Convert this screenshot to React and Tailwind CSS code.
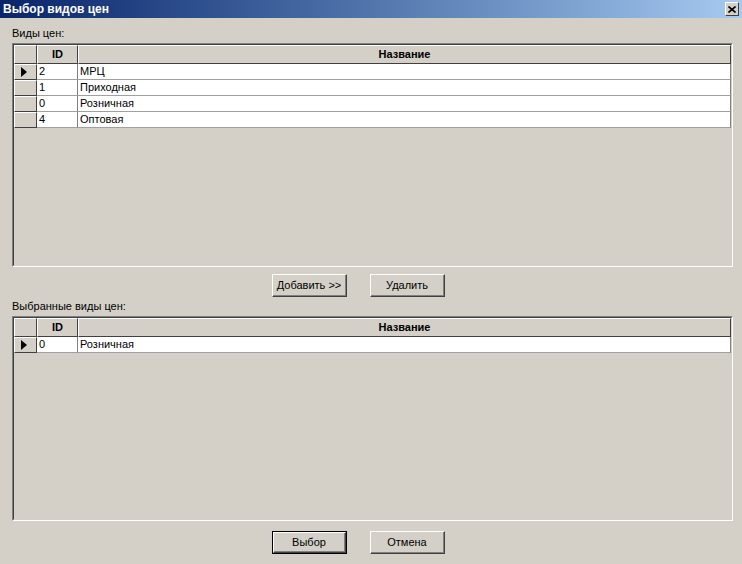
import React from 'react'

const font = { fontFamily: '"Liberation Sans", Arial, sans-serif' }

const priceTypes = [
	{ id: '2', name: 'МРЦ' },
	{ id: '1', name: 'Приходная' },
	{ id: '0', name: 'Розничная' },
	{ id: '4', name: 'Оптовая' },
]

const selected = [{ id: '0', name: 'Розничная' }]

function Arrow() {
	return (
		<svg width="6" height="10" viewBox="0 0 6 10" className="block">
			<path d="M0 0 L6 5 L0 10 Z" fill="#000" />
		</svg>
	)
}

function HeaderCell({ children, className = '' }) {
	return (
		<div className={`h-full border-t border-l border-t-white border-l-white border-r border-b border-r-[#404040] border-b-[#404040] bg-[#d4d0c8] flex items-center justify-center font-bold text-black ${className}`}>
			{children}
		</div>
	)
}

function Grid({ rows, height }) {
	return (
		<div className={`border-t border-l border-t-[#808080] border-l-[#808080] border-r border-b border-r-white border-b-white ${height}`}>
			<div className="h-full border-t border-l border-t-[#404040] border-l-[#404040] border-r border-b border-r-[#d4d0c8] border-b-[#d4d0c8] bg-[#d4d0c8] overflow-hidden">
				<div className="flex h-[19px]">
					<HeaderCell className="w-[23px]" />
					<HeaderCell className="w-[41px]">ID</HeaderCell>
					<HeaderCell className="flex-1">Название</HeaderCell>
				</div>
				{rows.map((r, i) => (
					<div key={r.id} className="flex h-[16px]">
						<div className="w-[23px] h-full border-t border-l border-t-white border-l-white border-r border-b border-r-[#404040] border-b-[#404040] bg-[#d4d0c8] flex items-center pl-[6px]">
							{i === 0 && <Arrow />}
						</div>
						<div className="w-[41px] h-full bg-white border-r border-b border-r-[#808080] border-b-[#a0a0a0] flex items-center pl-[2px] text-black">
							{r.id}
						</div>
						<div className="flex-1 h-full bg-white border-r border-b border-r-[#808080] border-b-[#a0a0a0] flex items-center pl-[2px] text-black">
							{r.name}
						</div>
					</div>
				))}
			</div>
		</div>
	)
}

function Button({ children, isDefault }) {
	return (
		<div className={`w-[75px] h-[23px] bg-[#d4d0c8] ${isDefault ? 'border border-black' : ''}`}>
			<div className="w-full h-full border-t border-l border-t-white border-l-white border-r border-b border-r-[#404040] border-b-[#404040] flex">
				<div className="flex-1 border-r border-b border-r-[#808080] border-b-[#808080] flex items-center justify-center text-black">
					{children}
				</div>
			</div>
		</div>
	)
}

export default function App() {
	return (
		<div style={font} className="w-[742px] h-[564px] bg-[#d4d0c8] text-[11px] flex flex-col overflow-hidden">
			<div className="h-[18px] flex items-center justify-between bg-gradient-to-r from-[#0a246a] to-[#a6caf0] pl-[3px] pr-[3px]">
				<span className="text-white font-bold text-[12px] leading-none">Выбор видов цен</span>
				<div className="w-[14px] h-[14px] bg-[#d4d0c8] border-t border-l border-t-white border-l-white border-r border-b border-r-[#404040] border-b-[#404040] flex items-center justify-center">
					<svg width="8" height="7" viewBox="0 0 8 7">
						<path d="M0.5 0.5 L7.5 6.5 M7.5 0.5 L0.5 6.5" stroke="#000" strokeWidth="1.6" />
					</svg>
				</div>
			</div>
			<div className="flex flex-col pl-[12px] pr-[9px]">
				<div className="mt-[8px] h-[14px] leading-[14px] text-black">Виды цен:</div>
				<div className="mt-[3px]">
					<Grid rows={priceTypes} height="h-[224px]" />
				</div>
				<div className="mt-[7px] flex gap-[23px] pl-[260px]">
					<Button>Добавить &gt;&gt;</Button>
					<Button>Удалить</Button>
				</div>
				<div className="mt-[2px] h-[14px] leading-[14px] text-black">Выбранные виды цен:</div>
				<div className="mt-[3px]">
					<Grid rows={selected} height="h-[205px]" />
				</div>
				<div className="mt-[10px] flex gap-[23px] pl-[260px]">
					<Button isDefault>Выбор</Button>
					<Button>Отмена</Button>
				</div>
			</div>
		</div>
	)
}
